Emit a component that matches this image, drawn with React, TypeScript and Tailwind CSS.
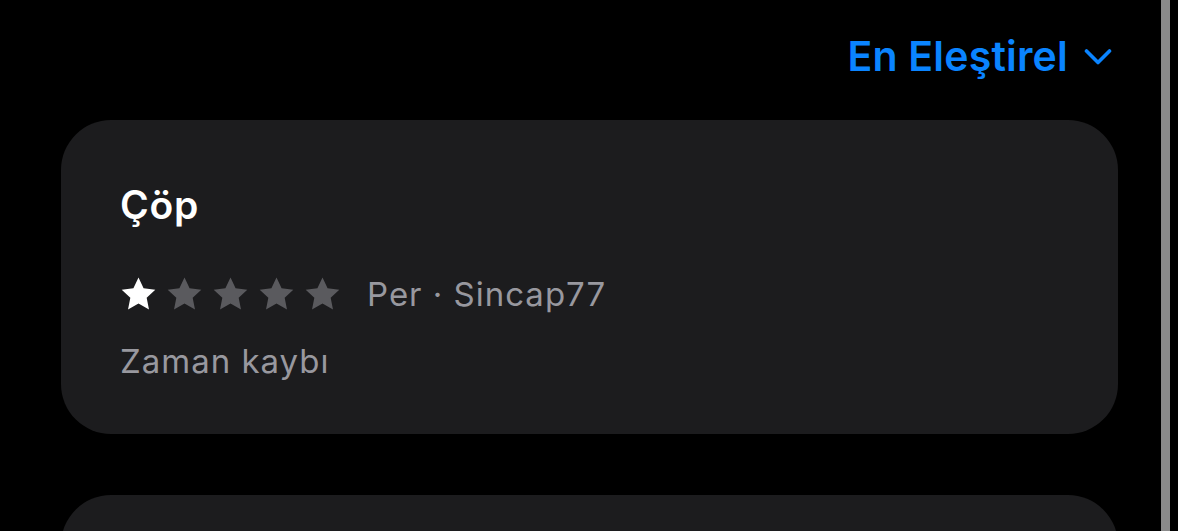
import React from 'react';

const Star = ({ filled }: { filled: boolean }) => (
  <svg width="37" height="36" viewBox="0 0 24 23" className={filled ? 'text-white' : 'text-[#5a5a5e]'}>
    <path
      d="M12 0.8l3.3 7 7.6 0.9-5.6 5.2 1.5 7.6L12 17.7l-6.8 3.8 1.5-7.6L1.1 8.7l7.6-0.9z"
      fill="currentColor"
    />
  </svg>
);

export default function App() {
  const rating = 1;

  return (
    <div className="flex h-[531px] w-full overflow-hidden bg-black" style={{ fontFamily: 'Inter, "Noto Sans", sans-serif' }}>
      <div className="flex-1 pl-[61px] pr-[43px]">
        <div className="flex items-center justify-end gap-[16px] pt-[32px] pr-[6px]">
          <span className="text-[41px] font-semibold leading-[48px] tracking-[0.005em] text-[#0a84ff]">En Eleştirel</span>
          <svg width="28" height="18" viewBox="0 0 28 18" className="mt-[2px]">
            <polyline points="2.5,3 14,14.5 25.5,3" fill="none" stroke="#0a84ff" strokeWidth="3.6" strokeLinecap="round" strokeLinejoin="round" />
          </svg>
        </div>

        <div className="mt-[40px] h-[314px] rounded-[50px] bg-[#1c1c1e] pl-[59px] pt-[62px]">
          <div className="text-[39px] font-semibold leading-[46px] tracking-[0.02em] text-white">Çöp</div>
          <div className="mt-[46px] flex items-center">
            <div className="flex gap-[9px]">
              {[1, 2, 3, 4, 5].map((i) => (
                <Star key={i} filled={i <= rating} />
              ))}
            </div>
            <span className="ml-[26px] text-[33px] leading-[40px] tracking-[0.03em] text-[#98989f]">Per · Sincap77</span>
          </div>
          <div className="mt-[27px] text-[33px] leading-[40px] tracking-[0.03em] text-[#98989f]">Zaman kaybı</div>
        </div>

        <div className="mt-[61px] h-[200px] rounded-[50px] bg-[#1c1c1e]" />
      </div>
      <div className="w-[9px] bg-[#8a8a8a]" />
      <div className="w-[8px]" />
    </div>
  );
}
